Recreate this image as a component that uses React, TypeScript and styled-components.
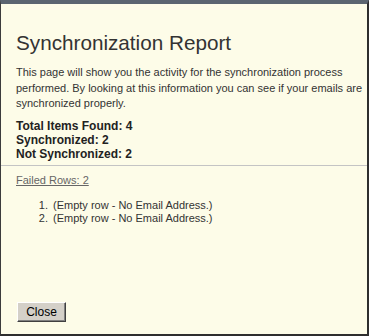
import React from "react";
import styled, { createGlobalStyle } from "styled-components";

const GlobalStyle = createGlobalStyle`
    html, body {
        margin: 0;
        padding: 0;
        background: #fdfce8;
    }
`

const failedRows = [
    "(Empty row - No Email Address.)",
    "(Empty row - No Email Address.)",
]

const App = () => {
    return (
        <>
            <GlobalStyle />
            <Window>
                <Content>
                    <Title>Synchronization Report</Title>
                    <Intro>
                        This page will show you the activity for the synchronization process
                        performed. By looking at this information you can see if your emails are
                        synchronized properly.
                    </Intro>
                    <Stats>
                        <Stat>Total Items Found: 4</Stat>
                        <Stat>Synchronized: 2</Stat>
                        <Stat>Not Synchronized: 2</Stat>
                    </Stats>
                </Content>
                <Divider />
                <Content>
                    <FailedLink href="#">Failed Rows: 2</FailedLink>
                    <FailedList>
                        {failedRows.map((row, i) => (
                            <li key={i}>{row}</li>
                        ))}
                    </FailedList>
                </Content>
                <Footer>
                    <CloseButton>Close</CloseButton>
                </Footer>
            </Window>
        </>
    )
}

export default App

const Window = styled.div`
    box-sizing: border-box;
    width: 369px;
    height: 336px;
    background: #fdfce8;
    border-top: 4px solid #5b6570;
    border-left: 1px solid #3c3c3c;
    border-right: 2px solid #2e2e2e;
    border-bottom: 2px solid #2e2e2e;
    display: flex;
    flex-direction: column;
    font-family: "Liberation Sans", Arial, sans-serif;
    color: #333;
`

const Content = styled.div`
    padding: 0 4px 0 15px;
`

const Title = styled.h1`
    margin: 25px 0 0;
    font-size: 20.7px;
    font-weight: normal;
    line-height: 28px;
    color: #333;
`

const Intro = styled.p`
    margin: 8px 0 0;
    font-size: 11px;
    line-height: 15.5px;
`

const Stats = styled.div`
    margin-top: 7px;
    display: flex;
    flex-direction: column;
`

const Stat = styled.div`
    font-size: 12px;
    font-weight: bold;
    line-height: 14px;
    color: #222;
`

const Divider = styled.div`
    margin-top: 4px;
    border-top: 1px solid #c4c4c4;
`

const FailedLink = styled.a`
    display: inline-block;
    margin-top: 7px;
    font-size: 11px;
    line-height: 14px;
    color: #666;
    text-decoration: underline;
`

const FailedList = styled.ol`
    margin: 11px 0 0;
    padding-left: 35px;
    font-size: 11px;
    li {
        line-height: 13px;
        padding-left: 2px;
    }
`

const Footer = styled.div`
    margin-top: auto;
    padding: 0 0 12px 16px;
`

const CloseButton = styled.button`
    box-sizing: border-box;
    width: 49px;
    height: 20px;
    padding: 0;
    background: #d4d0c8;
    border: 1px solid;
    border-color: #fff #404040 #404040 #fff;
    box-shadow: inset -1px -1px 0 #808080;
    font-family: "Liberation Sans", Arial, sans-serif;
    font-size: 12px;
    color: #000;
`
